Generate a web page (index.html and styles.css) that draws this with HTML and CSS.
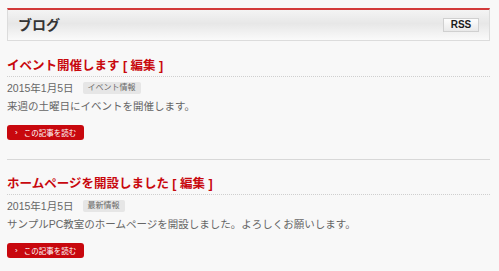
FILE: index.html
```html
<!DOCTYPE html>
<html lang="ja">
<head>
  <meta charset="utf-8">
  <title>ブログ</title>
  <link rel="stylesheet" href="styles.css">
</head>
<body>
  <div class="blog-header">
    <h2>ブログ</h2>
    <a class="rss-button" href="#">RSS</a>
  </div>

  <div class="post">
    <h3 class="post-title">イベント開催します <span class="edit">[ 編集 ]</span></h3>
    <div class="post-meta">
      <span class="post-date">2015年1月5日</span>
      <span class="post-tag">イベント情報</span>
    </div>
    <p class="post-text">来週の土曜日にイベントを開催します。</p>
    <a class="more-button" href="#"><span class="arrow">›</span>この記事を読む</a>
  </div>

  <div class="post">
    <h3 class="post-title">ホームページを開設しました <span class="edit">[ 編集 ]</span></h3>
    <div class="post-meta">
      <span class="post-date">2015年1月5日</span>
      <span class="post-tag">最新情報</span>
    </div>
    <p class="post-text">サンプルPC教室のホームページを開設しました。よろしくお願いします。</p>
    <a class="more-button" href="#"><span class="arrow">›</span>この記事を読む</a>
  </div>
</body>
</html>
```

FILE: styles.css
```css
* {
  box-sizing: border-box;
}

body {
  margin: 0;
  padding: 8px 9px 0 7px;
  background-color: #f8f8f8;
  font-family: "Liberation Sans", "Noto Sans CJK JP", sans-serif;
  color: #555;
}

.blog-header {
  display: flex;
  align-items: center;
  justify-content: space-between;
  height: 33px;
  padding: 0 10px;
  border: 1px solid #dcdcdc;
  border-top: 2px solid #d23a3a;
  background: linear-gradient(#f4f4f4, #e7e7e7 45%, #fafafa);
  margin-bottom: 1px;
}

.blog-header h2 {
  margin: 0;
  font-size: 14px;
  font-weight: bold;
  color: #333;
  line-height: 16px;
}

.rss-button {
  display: block;
  width: 36px;
  height: 14px;
  line-height: 12px;
  text-align: center;
  font-size: 10px;
  font-weight: bold;
  color: #1a1a1a;
  text-decoration: none;
  border: 1px solid #d0d0d0;
  background: linear-gradient(#fdfdfd, #e9e9e9);
}

.post {
  padding: 16px 0 19px;
  border-bottom: 1px solid #d8d8d8;
}

.post:last-child {
  border-bottom: none;
}

.post-title {
  margin: 0;
  font-size: 12.5px;
  line-height: 16px;
  font-weight: bold;
  color: #c8080e;
  padding-bottom: 2px;
  border-bottom: 1px dotted #cfcfcf;
}

.post-meta {
  display: flex;
  align-items: center;
  margin-top: 5px;
  height: 12px;
  font-size: 10.5px;
  line-height: 12px;
  color: #666;
}

.post-tag {
  margin-left: 9px;
  padding: 0 5px;
  font-size: 8px;
  line-height: 12px;
  color: #666;
  background-color: #e6e6e6;
  border-radius: 2px;
}

.post-text {
  margin: 5px 0 0;
  font-size: 10.5px;
  line-height: 14px;
  color: #666;
}

.more-button {
  display: flex;
  align-items: center;
  width: 77px;
  height: 15px;
  margin-top: 12px;
  padding-left: 8px;
  font-size: 7.5px;
  color: #fff;
  text-decoration: none;
  background-color: #c8080e;
  border-radius: 3px;
}

.more-button .arrow {
  font-size: 8px;
  margin-right: 6px;
}
```
